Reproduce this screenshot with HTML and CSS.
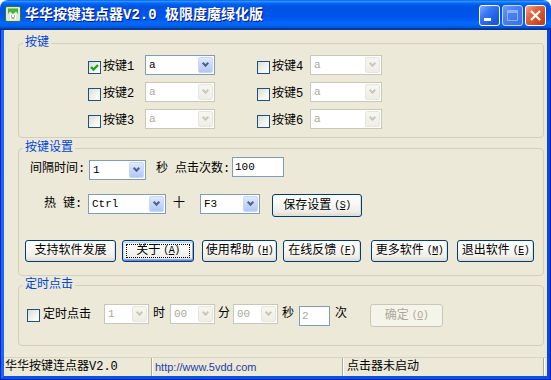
FILE: index.html
```html
<!DOCTYPE html>
<html>
<head>
<meta charset="utf-8">
<title>华华按键连点器</title>
<link rel="stylesheet" href="styles.css">
</head>
<body>
<div class="window">
  <div class="titlebar">
    <svg class="appicon" width="16" height="16" viewBox="0 0 16 16">
      <rect x="0.5" y="0.5" width="15" height="15" rx="1.5" fill="#DDE8D6" stroke="#2F7A22"/>
      <path d="M3 2.5h10v5.5l-2-2.5-3 2.5-3-2.5-2 2.5z" fill="#4DB038"/>
      <path d="M5 8.5h6v5H5z" fill="#FFFFFF"/>
      <path d="M6 10h1M9 10h1M6.5 12h3" stroke="#3A3A3A" stroke-width="0.9"/>
    </svg>
    <div class="title">华华按键连点器V2.0 极限度魔绿化版</div>
    <div class="caps">
      <span class="cap">
        <svg width="19" height="19" viewBox="0 0 19 19"><rect x="4" y="12" width="7" height="3" fill="#fff"/></svg>
      </span>
      <span class="cap cap-dis">
        <svg width="19" height="19" viewBox="0 0 19 19"><path d="M4.5 4.5h10v10h-10z" fill="none" stroke="#8FB2F6" stroke-width="1"/><rect x="4" y="4" width="11" height="3" fill="#8FB2F6"/></svg>
      </span>
      <span class="cap cap-close">
        <svg width="19" height="19" viewBox="0 0 19 19"><path d="M5 5l9 9M14 5l-9 9" stroke="#fff" stroke-width="2.2"/></svg>
      </span>
    </div>
  </div>
  <div class="frame">
    <div class="client">
      <fieldset class="grp g1">
        <legend>按键</legend>
        <div class="keygrid">
          <div class="keyitem">
            <span class="cb"><svg width="11" height="11" viewBox="0 0 11 11"><path d="M2 5l2.5 2.6L9 3" fill="none" stroke="#21A121" stroke-width="2.4"/></svg></span>
            <span class="klabel">按键1</span>
            <div class="combo w70"><span class="cv">a</span><span class="dd"></span></div>
          </div>
          <div class="keyitem right">
            <span class="cb"></span>
            <span class="klabel">按键4</span>
            <div class="combo dis w72"><span class="cv">a</span><span class="dd"></span></div>
          </div>
          <div class="keyitem">
            <span class="cb"></span>
            <span class="klabel">按键2</span>
            <div class="combo dis w70"><span class="cv">a</span><span class="dd"></span></div>
          </div>
          <div class="keyitem right">
            <span class="cb"></span>
            <span class="klabel">按键5</span>
            <div class="combo dis w72"><span class="cv">a</span><span class="dd"></span></div>
          </div>
          <div class="keyitem">
            <span class="cb"></span>
            <span class="klabel">按键3</span>
            <div class="combo dis w70"><span class="cv">a</span><span class="dd"></span></div>
          </div>
          <div class="keyitem right">
            <span class="cb"></span>
            <span class="klabel">按键6</span>
            <div class="combo dis w72"><span class="cv">a</span><span class="dd"></span></div>
          </div>
        </div>
      </fieldset>

      <fieldset class="grp g2">
        <legend>按键设置</legend>
        <div class="row r1">
          <span class="lbl l-interval">间隔时间:</span>
          <div class="combo w57 c-int"><span class="cv">1</span><span class="dd"></span></div>
          <span class="lbl l-sec">秒</span>
          <span class="lbl l-count">点击次数:</span>
          <span class="edit w52">100</span>
        </div>
        <div class="row r2">
          <span class="lbl l-hot"><span>热</span><span class="hk2">键:</span></span>
          <div class="combo w78"><span class="cv">Ctrl</span><span class="dd"></span></div>
          <span class="lbl l-plus">十</span>
          <div class="combo w60 c-f3"><span class="cv">F3</span><span class="dd"></span></div>
          <span class="btn tall b-save">保存设置<span class="mn">(<u>S</u>)</span></span>
        </div>
        <div class="row btnrow">
          <span class="btn b-support">支持软件发展</span>
          <span class="btn def b-about">关于<span class="mn">(<u>A</u>)</span></span>
          <span class="btn b-help">使用帮助<span class="mn">(<u>H</u>)</span></span>
          <span class="btn b-feedback">在线反馈<span class="mn">(<u>F</u>)</span></span>
          <span class="btn b-more">更多软件<span class="mn">(<u>M</u>)</span></span>
          <span class="btn b-exit">退出软件<span class="mn">(<u>E</u>)</span></span>
        </div>
      </fieldset>

      <fieldset class="grp g3">
        <legend>定时点击</legend>
        <div class="row r3">
          <span class="cb"></span>
          <span class="lbl l-timer">定时点击</span>
          <div class="combo dis w45"><span class="cv">1</span><span class="dd"></span></div>
          <span class="lbl l-unit u-h">时</span>
          <div class="combo dis w45 c-min"><span class="cv">00</span><span class="dd"></span></div>
          <span class="lbl l-unit u-m">分</span>
          <div class="combo dis w45 c-sec"><span class="cv">00</span><span class="dd"></span></div>
          <span class="lbl l-unit u-s">秒</span>
          <span class="edit dis w31">2</span>
          <span class="lbl l-unit u-t">次</span>
          <span class="btn tall dis b-ok">确定<span class="mn">(<u>O</u>)</span></span>
        </div>
      </fieldset>

      <div class="status">
        <span class="panel p1">华华按键连点器V2.0</span>
        <span class="panel p2">http://www.5vdd.com</span>
        <span class="panel p3">点击器未启动</span>
        <span class="grip"></span>
      </div>
    </div>
  </div>
</div>
</body>
</html>
```

FILE: styles.css
```css
html, body {
  margin: 0;
  padding: 0;
  background: #ffffff;
}

.window {
  width: 551px;
  height: 380px;
  display: flex;
  flex-direction: column;
  font: 12px/12px "Liberation Mono", "Noto Sans CJK SC", monospace;
  color: #000;
}

/* ---------- title bar ---------- */
.titlebar {
  height: 30px;
  flex: none;
  box-sizing: border-box;
  display: flex;
  align-items: flex-start;
  padding: 5px 5px 0 5px;
  border-radius: 8px 8px 0 0;
  background: linear-gradient(to bottom,
    #0058EE 0%, #3593FF 4%, #288EFF 6%, #127DFF 8%, #036FFC 10%,
    #0262EE 14%, #0057E5 20%, #0054E3 24%, #0055EB 56%, #005BF5 66%,
    #026AFE 76%, #0062EF 86%, #0052D6 92%, #0040AB 94%, #003092 100%);
}

.appicon {
  flex: none;
  margin-top: 1px;
}

.title {
  margin-left: 4px;
  font-weight: bold;
  font-size: 14px;
  line-height: 21px;
  letter-spacing: 0;
  color: #ffffff;
  text-shadow: 1px 1px #0A1883;
  white-space: nowrap;
}

.caps {
  margin-left: auto;
  display: flex;
  gap: 2px;
}

.cap {
  width: 21px;
  height: 21px;
  box-sizing: border-box;
  border: 1px solid #ffffff;
  border-radius: 3px;
  background: linear-gradient(135deg, #7FAAFD 0%, #3A78F2 35%, #2261E6 65%, #1A4FD0 100%);
  display: flex;
}

.cap-dis {
  border-color: #C5D6FB;
  background: linear-gradient(135deg, #6D9CF8 0%, #4A80F0 40%, #3A6FE8 100%);
}

.cap-close {
  background: linear-gradient(135deg, #F2A68A 0%, #E0683F 35%, #D0502B 65%, #B93A1B 100%);
}

/* ---------- frame ---------- */
.frame {
  flex: 1;
  display: flex;
  background: #0019CF;
  padding: 0 1px 1px 1px;
  min-height: 0;
}

.client {
  flex: 1;
  display: flex;
  flex-direction: column;
  background: #ECE9D8;
  border: 3px solid #0855DD;
  border-top: 0;
  border-left-color: #166AEE;
  border-right-color: #0A4ADA;
  min-height: 0;
}

/* ---------- group boxes ---------- */
.grp {
  margin: 0 3px 0 14px;
  padding: 0;
  border: 1px solid #D0D0BF;
  border-radius: 4px;
  min-width: 0;
}

.grp legend {
  margin-left: 4px;
  padding: 0 2px;
  color: #0046D5;
  font-size: 12px;
  line-height: 12px;
}

.g1 {
  margin-top: 7px;
  padding: 6px 0 8px 0;
}

.g2 {
  margin-top: 4px;
  padding: 3px 0 13px 0;
}

.g3 {
  margin-top: 3px;
  padding: 13px 0 18px 0;
}

/* ---------- key grid ---------- */
.keygrid {
  display: grid;
  grid-template-columns: auto auto;
  justify-content: start;
  column-gap: 42px;
  row-gap: 7px;
  margin-left: 69px;
}

.keyitem {
  display: flex;
  align-items: flex-start;
  height: 20px;
}

.keyitem .cb {
  margin-top: 6px;
}

.klabel {
  width: 42px;
  margin-left: 2px;
  margin-top: 6px;
  white-space: nowrap;
}

.keyitem.right .klabel {
  width: 38px;
}

/* ---------- checkbox ---------- */
.cb {
  flex: none;
  width: 13px;
  height: 13px;
  box-sizing: border-box;
  border: 1px solid #1C5180;
  background: linear-gradient(135deg, #DCDCD7 0%, #F4F4F0 60%, #FFFFFF 100%);
  display: flex;
}

/* ---------- combo box ---------- */
.combo {
  flex: none;
  display: flex;
  box-sizing: border-box;
  height: 20px;
  border: 1px solid #7F9DB9;
  background: #ffffff;
  padding: 1px;
}

.cv {
  flex: 1;
  padding-left: 2px;
  font: 11px/16px "Liberation Mono", monospace;
  color: #000;
  overflow: hidden;
}

.dd {
  flex: none;
  width: 15px;
  box-sizing: border-box;
  border: 1px solid #CAD8F8;
  border-radius: 2px;
  background: linear-gradient(to bottom, #E0E9FE 0%, #C7D7FB 50%, #B3C7F6 100%);
  display: flex;
  align-items: center;
  justify-content: center;
}

.dd::after {
  content: "";
  width: 3px;
  height: 3px;
  border: solid #4D6185;
  border-width: 0 2px 2px 0;
  transform: rotate(45deg);
  margin-top: -3px;
}

.combo.dis {
  border-color: #C9C7BA;
}

.combo.dis .cv {
  color: #ACA899;
}

.combo.dis .dd {
  border-color: #E8E6DC;
  background: linear-gradient(to bottom, #F7F7F2 0%, #EEEDE6 100%);
}

.combo.dis .dd::after {
  border-color: #C9C7BA;
}

.w45 { width: 45px; }
.w57 { width: 57px; }
.w60 { width: 60px; }
.w70 { width: 70px; }
.w72 { width: 72px; }
.w78 { width: 78px; }
.w52 { width: 52px; }
.w31 { width: 31px; }

/* ---------- edit ---------- */
.edit {
  flex: none;
  box-sizing: border-box;
  height: 20px;
  border: 1px solid #7F9DB9;
  background: #ffffff;
  padding-left: 2px;
  font: 11px/18px "Liberation Mono", monospace;
}

.edit.dis {
  color: #ACA899;
}

/* ---------- rows ---------- */
.row {
  display: flex;
  align-items: flex-start;
}

.lbl {
  flex: none;
  white-space: nowrap;
}

.r1 {
  height: 23px;
  margin-left: 11px;
}

.l-interval {
  width: 59px;
  margin-top: 6px;
}

.c-int {
  margin-top: 3px;
}

.l-sec {
  width: 12px;
  margin-left: 10px;
  margin-top: 6px;
}

.l-count {
  width: 57px;
  margin-left: 7px;
  margin-top: 6px;
}

.r2 {
  height: 23px;
  margin-top: 14px;
  margin-left: 6px;
}

.l-hot {
  width: 44px;
  padding-left: 19px;
  margin-top: 4px;
  display: flex;
}

.hk2 {
  margin-left: 7px;
}

.l-plus {
  width: 12px;
  margin-left: 7px;
  margin-top: 4px;
}

.c-f3 {
  margin-left: 15px;
}

.b-save {
  width: 90px;
  margin-left: 12px;
}

/* ---------- buttons ---------- */
.btn {
  flex: none;
  position: relative;
  box-sizing: border-box;
  height: 22px;
  border: 1px solid #003C74;
  border-radius: 3px;
  background: linear-gradient(to bottom, #FFFFFF 0%, #F8F8F5 40%, #EEEDE7 80%, #DCD8CC 100%);
  box-shadow: inset -1px -1px 0 #E2DFD3;
  display: flex;
  align-items: center;
  justify-content: center;
  white-space: nowrap;
}

.btn.tall {
  height: 23px;
}

.mn {
  font-size: 10px;
  margin-left: 3px;
  letter-spacing: -0.5px;
}

.btn.def {
  box-shadow:
    inset 0 1px 0 #CEE7FF,
    inset 0 -1px 0 #6982EE,
    inset 1px 0 0 #BCD4F6,
    inset -1px 0 0 #89ADE4,
    inset 0 2px 0 #BCD4F6,
    inset 0 -2px 0 #89ADE4;
}

.btn.def::after {
  content: "";
  position: absolute;
  left: 3px;
  top: 3px;
  right: 3px;
  bottom: 3px;
  border: 1px dotted #000;
}

.btn.dis {
  border-color: #C9C7BA;
  background: #F5F4EA;
  box-shadow: none;
  color: #ACA899;
}

.btnrow {
  margin-top: 23px;
  margin-left: 6px;
  height: 22px;
}

.b-support { width: 91px; }
.b-about { width: 72px; margin-left: 6px; }
.b-help { width: 75px; margin-left: 8px; }
.b-feedback { width: 78px; margin-left: 6px; }
.b-more { width: 77px; margin-left: 10px; }
.b-exit { width: 77px; margin-left: 9px; }

/* ---------- timer row ---------- */
.r3 {
  height: 23px;
  margin-left: 8px;
}

.r3 .cb {
  margin-top: 5px;
}

.l-timer {
  width: 61px;
  margin-left: 3px;
  margin-top: 5px;
}

.l-unit {
  width: 12px;
  margin-top: 4px;
}

.u-h { margin-left: 4px; }
.c-min { margin-left: 5px; }
.u-m { margin-left: 3px; }
.c-sec { margin-left: 3px; }
.u-s { margin-left: 4px; }
.r3 .edit { margin-left: 5px; margin-top: 2px; }
.u-t { margin-left: 5px; }

.b-ok {
  width: 73px;
  margin-left: 23px;
}

/* ---------- status bar ---------- */
.status {
  margin-top: auto;
  height: 19px;
  flex: none;
  display: flex;
  align-items: stretch;
  border-top: 1px solid #D8D4C4;
  box-sizing: border-box;
}

.panel {
  display: flex;
  align-items: center;
  box-sizing: border-box;
  border-right: 1px solid #ACA899;
  box-shadow: 1px 0 0 #FFFFFF;
  white-space: nowrap;
}

.p1 {
  width: 148px;
  padding-left: 1px;
}

.p2 {
  width: 191px;
  padding-left: 3px;
  color: #1E3FA5;
  font: 11px/12px "Liberation Sans", Arial, sans-serif;
}

.p3 {
  width: 201px;
  padding-left: 4px;
}

.grip {
  flex: 1;
}
```
